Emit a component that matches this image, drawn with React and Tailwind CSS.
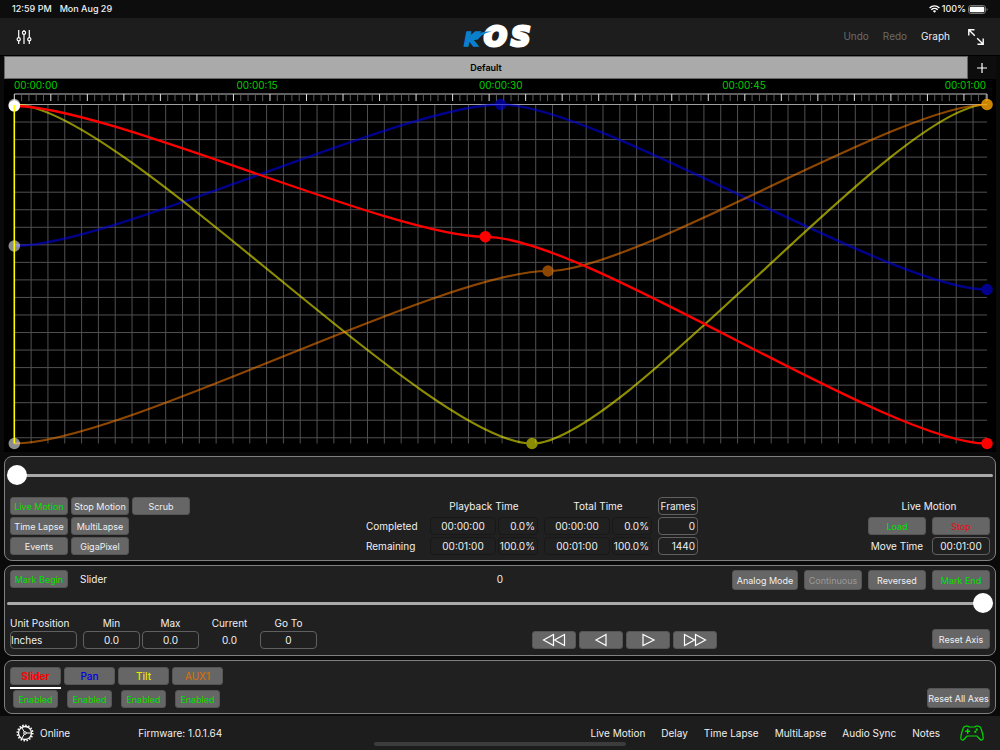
import React from 'react';

// graph area, in viewBox units
const LEFT = 10.3;
const RIGHT = 983;
const TOP = 25.5;
const BOTTOM = 364.5;

const CURVES = [
    { name: 'Pan', color: '#0000ff', opacity: 0.55, width: 2.3, points: [[10.3, 167], [496.7, 25.5], [983, 210.5]] },
    { name: 'Tilt', color: '#ffff00', opacity: 0.55, width: 2.2, points: [[10.3, 25.5], [528, 364.5], [983, 25.5]] },
    { name: 'AUX1', color: '#ff8000', opacity: 0.55, width: 2.2, points: [[10.3, 364.5], [544, 192], [983, 25.5]] },
    { name: 'Slider', color: '#ff0000', opacity: 1, width: 2.3, points: [[10.3, 27], [481.3, 157.8], [983, 364.5]] },
];

const RULER = [
    { label: '00:00:00', x: 10, anchor: 'start' },
    { label: '00:00:15', x: 253, anchor: 'middle' },
    { label: '00:00:30', x: 496.7, anchor: 'middle' },
    { label: '00:00:45', x: 740, anchor: 'middle' },
    { label: '00:01:00', x: 982, anchor: 'end' },
];

const AXES = [
    { name: 'Slider', color: 'text-[#ff0000] font-bold', active: true },
    { name: 'Pan', color: 'text-[#0000e6] font-medium' },
    { name: 'Tilt', color: 'text-[#e6e600] font-medium' },
    { name: 'AUX1', color: 'text-[#e07000]' },
];

const range = (n) => Array.from({ length: n }, (_, i) => i);

const curvePath = (points) => points.map(([x, y], i) => {
    if (i === 0) return `M${x} ${y}`;
    const [px, py] = points[i - 1];
    const h = (x - px) * 0.2;
    return `C${px + h} ${py} ${x - h} ${y} ${x} ${y}`;
}).join(' ');

const Button = ({ className = '', size = 'h-[18px] w-[58px]', text = 'text-[9px]', children, ...rest }) => (
    <button
        {...rest}
        className={`${size} ${text} flex shrink-0 items-center justify-center whitespace-nowrap rounded-[3px] border border-[#555] bg-[#666] leading-none ${className}`}
    >
        {children}
    </button>
);

const RangeSlider = ({ label, value }) => (
    <input
        type="range"
        aria-label={label}
        defaultValue={value}
        className="block h-5 w-full appearance-none bg-transparent [&::-webkit-slider-runnable-track]:h-[3px] [&::-webkit-slider-runnable-track]:rounded-full [&::-webkit-slider-runnable-track]:bg-[#aaa] [&::-webkit-slider-thumb]:-mt-[9px] [&::-webkit-slider-thumb]:size-5 [&::-webkit-slider-thumb]:appearance-none [&::-webkit-slider-thumb]:rounded-full [&::-webkit-slider-thumb]:bg-white"
    />
);

const Panel = ({ className = '', children }) => (
    <section className={`rounded-lg border border-[#808080] bg-[#202020] ${className}`}>
        {children}
    </section>
);

const StatusBar = () => (
    <div className="flex h-[18px] items-center justify-between bg-[#0d0d0d] px-3 text-[9px] font-medium">
        <div className="flex gap-2">
            <span>12:59 PM</span>
            <span>Mon Aug 29</span>
        </div>
        <div className="flex items-center gap-0.5">
            <svg width="11" height="8" viewBox="0 0 11 8" fill="none" stroke="white" strokeWidth="1.4">
                <path d="M.6 2.9a7 7 0 0 1 9.8 0M2.3 4.8a4.6 4.6 0 0 1 6.4 0" />
                <path d="M5.5 7.8 3.8 6.1a2.5 2.5 0 0 1 3.4 0z" fill="white" stroke="none" />
            </svg>
            <span>100%</span>
            <svg width="20" height="9" viewBox="0 0 20 9">
                <rect x=".5" y=".5" width="17" height="8" rx="2.3" fill="none" stroke="#777" />
                <rect x="1.7" y="1.7" width="14.6" height="5.6" rx="1.3" fill="white" />
                <path d="M18.6 3v3c.8-.3 1-.9 1-1.5s-.2-1.2-1-1.5z" fill="#777" />
            </svg>
        </div>
    </div>
);

const Logo = () => (
    <svg width="76" height="34" viewBox="0 0 76 34" role="img" aria-label="kOS" fontFamily="'DejaVu Sans'" fontWeight="700" fontStyle="oblique">
        <text x="2" y="26" fontSize="19" fill="#0a7fcb" stroke="#0a7fcb" strokeWidth="1.4">K</text>
        <text x="22" y="26" fontSize="27" fill="white" stroke="white" strokeWidth="3">O</text>
        <text x="49" y="26" fontSize="27" fill="white" stroke="white" strokeWidth="3">S</text>
        <path d="M7 21c4-7 10-9.5 23-9.5-6 1.200-11 3.500-14 8z" fill="#0a7fcb" />
    </svg>
);

const Toolbar = () => (
    <header className="grid h-[38px] grid-cols-[1fr_auto_1fr] items-center border-b border-black bg-[#1d1d1d] px-4 text-[10px]">
        <button aria-label="Adjustments" className="justify-self-start">
            <svg width="16" height="16" viewBox="0 0 16 16" fill="none" stroke="white" strokeWidth="1.2">
                <path d="M2.7 1v7.6M2.7 11.8V15M8 1v1.200M8 5.400V15M13.300 1v7.600M13.300 11.800V15" />
                <circle cx="2.7" cy="10.2" r="1.6" />
                <circle cx="8" cy="3.8" r="1.6" />
                <circle cx="13.3" cy="10.2" r="1.6" />
            </svg>
        </button>
        <Logo />
        <div className="flex items-center gap-3.5 justify-self-end">
            <button className="text-[#6b6b6b]">Undo</button>
            <button className="text-[#6b6b6b]">Redo</button>
            <button>Graph</button>
            <button aria-label="Full screen" className="ml-1">
                <svg width="16" height="16" viewBox="0 0 16 16" fill="none" stroke="white" strokeWidth="1.4">
                    <path d="M.8 6.500V.8h5.700M1 1l5.800 5.800M9.200 9.200 15 15M15.200 9.500v5.700H9.500" />
                </svg>
            </button>
        </div>
    </header>
);

const Graph = () => (
    <svg viewBox="0 0 992 373" className="block h-auto w-full bg-black">
        <g fill="#00d000" fontSize="10" fontFamily="Inter">
            {RULER.map(({ label, x, anchor }) => (
                <text key={label} x={x} y="10" textAnchor={anchor}>{label}</text>
            ))}
        </g>

        {/* ruler */}
        <path d={`M${LEFT} 15H${RIGHT}`} stroke="#808080" strokeWidth="1.5" />
        {range(134).map((i) => (
            <path key={i} d={`M${LEFT + i * 7.305} 15V22`} stroke={i % 5 === 0 ? '#e0e0e0' : '#5c5c5c'} />
        ))}
        <path d={`M${RIGHT} 15V22`} stroke="#e0e0e0" />

        {/* grid */}
        <g stroke="#505050">
            {range(57).map((i) => (
                <path key={i} d={`M${LEFT + (i + 1) * 16.82} ${TOP}V${BOTTOM}`} />
            ))}
            {range(19).map((i) => (
                <path key={i} d={`M${LEFT} ${TOP + (i + 1) * 17.54}H${RIGHT}`} />
            ))}
        </g>
        <path d={`M${LEFT} ${TOP}H${RIGHT}`} stroke="#a0a0a0" />

        {CURVES.map(({ name, color, opacity, width, points }) => (
            <g key={name} opacity={opacity}>
                <path d={curvePath(points)} fill="none" stroke={color} strokeWidth={width} />
                {points.slice(1).map(([x, y]) => (
                    <circle key={x} cx={x} cy={y} r="5.7" fill={color} />
                ))}
            </g>
        ))}

        {/* start points and playhead */}
        <circle cx={LEFT} cy="167" r="5.8" fill="white" opacity=".55" />
        <circle cx={LEFT} cy="364.5" r="5.8" fill="white" opacity=".55" />
        <circle cx={LEFT} cy={TOP} r="5.8" fill="white" opacity=".6" />
        <circle cx={LEFT} cy="27" r="5.8" fill="white" />
        <path d={`M${LEFT} 26V${BOTTOM}`} stroke="#ffff00" strokeWidth="1.6" />
    </svg>
);

const timeCell = 'w-[66px] rounded-sm border border-[#181818] text-center';
const percentCell = 'w-10 rounded-sm border border-[#181818] pr-0.5 text-right';
const frameCell = 'w-10 rounded-sm border border-[#606060] pr-0.5 text-right';

const TimeRow = ({ label, time, percent, frames }) => (
    <tr className="h-[18px]">
        <th scope="row" className="w-[62px] text-left font-normal">{label}</th>
        <td className={timeCell}>{time}</td>
        <td className={percentCell}>{percent}</td>
        <td></td>
        <td className={timeCell}>{time}</td>
        <td className={percentCell}>{percent}</td>
        <td></td>
        <td className={frameCell}>{frames}</td>
    </tr>
);

const PlaybackPanel = () => (
    <Panel className="px-0.5 pb-[5px] pt-2">
        <RangeSlider label="Playback position" value={0} />
        <div className="mt-3 flex items-start justify-between px-[3px]">
            <div className="grid grid-cols-3 gap-x-[3px] gap-y-0.5">
                <Button className="text-[#00e000]">Live Motion</Button>
                <Button>Stop Motion</Button>
                <Button>Scrub</Button>
                <Button>Time Lapse</Button>
                <Button>MultiLapse</Button>
                <span></span>
                <Button>Events</Button>
                <Button>GigaPixel</Button>
            </div>

            <table className="-my-0.5 ml-1.5 border-separate border-spacing-x-0.5 border-spacing-y-0.5 text-[10px] leading-4">
                <thead>
                    <tr className="h-[18px]">
                        <td></td>
                        <th scope="col" colSpan="2" className="font-normal">Playback Time</th>
                        <td className="w-0.5"></td>
                        <th scope="col" colSpan="2" className="font-normal">Total Time</th>
                        <td className="w-0.5"></td>
                        <th scope="col" className="rounded-sm border border-[#606060] font-normal">Frames</th>
                    </tr>
                </thead>
                <tbody>
                    <TimeRow label="Completed" time="00:00:00" percent="0.0%" frames="0" />
                    <TimeRow label="Remaining" time="00:01:00" percent="100.0%" frames="1440" />
                </tbody>
            </table>

            <div className="grid grid-cols-[58px_58px] gap-x-1.5 gap-y-0.5 text-[10px] leading-[18px]">
                <span className="col-span-2 text-center">Live Motion</span>
                <Button className="text-[#00e000]">Load</Button>
                <Button className="text-[#e01010]">Stop</Button>
                <label htmlFor="move-time" className="whitespace-nowrap text-center">Move Time</label>
                <input id="move-time" defaultValue="00:01:00" className="h-[18px] w-full rounded-sm border border-[#606060] text-center" />
            </div>
        </div>
    </Panel>
);

const Field = ({ id, label, value, className = 'w-[57px] text-center' }) => (
    <div className={className}>
        <label htmlFor={id} className="block h-[15px] whitespace-nowrap leading-[14px]">{label}</label>
        <input id={id} defaultValue={value} className="block h-[18px] w-full rounded-sm border border-[#606060] [text-align:inherit]" />
    </div>
);

const Transport = ({ label, d }) => (
    <Button size="h-[18px] w-11" aria-label={label}>
        <svg width="24" height="14" viewBox="0 0 24 14" fill="none" stroke="white" strokeWidth="1.2">
            <path d={d} />
        </svg>
    </Button>
);

const AxisPanel = () => (
    <Panel className="px-0.5 pb-1.5 pt-1 text-[10px]">
        <div className="grid h-5 grid-cols-[1fr_auto_1fr] px-[3px] leading-[18px]">
            <div className="flex gap-3">
                <Button className="text-[#00e000]">Mark Begin</Button>
                <span>Slider</span>
            </div>
            <span>0</span>
            <div className="flex justify-end gap-1.5">
                <Button size="h-5 w-[66px]">Analog Mode</Button>
                <Button size="h-5 w-[58px]" className="text-[#999]">Continuous</Button>
                <Button size="h-5 w-[58px]">Reversed</Button>
                <Button size="h-5 w-[58px]" className="text-[#00e000]">Mark End</Button>
            </div>
        </div>
        <div className="mt-[3px]">
            <RangeSlider label="Slider position" value={100} />
        </div>
        <div className="mt-[3px] flex items-end justify-between px-[3px]">
            <div className="flex gap-0.5">
                <Field id="unit" label="Unit Position" value="Inches" className="mr-1 w-[67px]" />
                <Field id="min" label="Min" value="0.0" />
                <Field id="max" label="Max" value="0.0" />
                <div className="w-[57px] text-center">
                    <div className="h-[15px] leading-[14px]">Current</div>
                    <div className="leading-[18px]">0.0</div>
                </div>
                <Field id="go-to" label="Go To" value="0" />
            </div>
            <div className="flex gap-[3px]">
                <Transport label="Rewind" d="M11.500 1.500v11L1.500 7zM22.500 1.500v11L12.500 7z" />
                <Transport label="Step back" d="M17 1.500v11L7 7z" />
                <Transport label="Play" d="M7 1.500v11L18 7z" />
                <Transport label="Fast forward" d="M1.500 1.500v11l10-5.500zM12.500 1.500v11l10-5.500z" />
            </div>
            <Button size="h-5 w-[58px]">Reset Axis</Button>
        </div>
    </Panel>
);

const AxesPanel = () => (
    <Panel className="flex items-end justify-between px-[5px] pb-[5px] pt-1.5">
        <div className="flex gap-[3px]">
            {AXES.map(({ name, color, active }) => (
                <div key={name} className="flex flex-col items-center">
                    <Button size="h-[18px] w-[51px]" text="text-[10px]" className={color}>{name}</Button>
                    <div className={`mb-px mt-0.5 h-0.5 w-full ${active ? 'bg-white' : ''}`}></div>
                    <Button size="h-[18px] w-[45px]" className="text-[#00e000]">Enabled</Button>
                </div>
            ))}
        </div>
        <Button size="h-5 w-[63px]">Reset All Axes</Button>
    </Panel>
);

const Footer = () => (
    <footer className="relative mt-auto flex h-[34px] items-center justify-between bg-[#1d1d1d] px-4 text-[10px]">
        <div className="absolute bottom-1 left-1/2 h-1 w-[252px] -translate-x-1/2 rounded-full bg-[#3c3c3c]"></div>
        <div className="relative flex items-center gap-1.5">
            <svg width="18" height="18" viewBox="0 0 18 18" fill="none" stroke="white">
                <circle cx="9" cy="9" r="7.7" strokeWidth="1.6" strokeDasharray="1.5 1.524" />
                <circle cx="9" cy="9" r="6.5" strokeWidth="1.3" />
                <circle cx="9" cy="9" r="1.3" />
                <path d="M10.3 9H15.5M8.3 7.9 5.7 3.400M8.300 10.100l-2.600 4.500" />
            </svg>
            <span>Online</span>
            <span className="ml-[62px]">Firmware: 1.0.1.64</span>
        </div>
        <nav className="relative flex items-center gap-4">
            <a href="#live-motion">Live Motion</a>
            <a href="#delay">Delay</a>
            <a href="#time-lapse">Time Lapse</a>
            <a href="#multilapse">MultiLapse</a>
            <a href="#audio-sync">Audio Sync</a>
            <a href="#notes">Notes</a>
            <button aria-label="Controller" className="ml-1">
                <svg width="24" height="16" viewBox="0 0 24 16" fill="none" stroke="#00dc00" strokeWidth="1.2">
                    <path d="M6 1.200h2l1 .8h6l1-.8h2c1.500 0 2.500.8 3 2.300 1.200 3.300 2.200 7 2.200 9.500 0 2.400-2.200 2.600-3.500 1L17 11H7l-2.700 3c-1.300 1.600-3.500 1.400-3.500-1 0-2.500 1-6.200 2.200-9.500.5-1.500 1.500-2.300 3-2.300z" />
                    <path d="M7.700 3.800v5M5.200 6.300h5" strokeWidth="1.4" />
                    <path d="M16.800 3.500v2M14.300 6.700h2" strokeWidth="2" />
                </svg>
            </button>
        </nav>
    </footer>
);

const App = () => {
    return (
        <div className="flex min-h-screen flex-col bg-[#0a0a0a] font-['Inter',sans-serif] text-[#f0f0f0]">
            <StatusBar />
            <Toolbar />
            <main className="px-1">
                <div className="flex h-[23px] bg-[#0d0d0d]">
                    <button className="flex-1 border border-[#666] bg-[#aaa] text-[9px] font-semibold text-black">Default</button>
                    <button aria-label="Add tab" className="flex w-7 items-center justify-center">
                        <svg width="10" height="10" viewBox="0 0 10 10" stroke="white" strokeWidth="1.2">
                            <path d="M5 0v10M0 5h10" />
                        </svg>
                    </button>
                </div>
                <Graph />
                <div className="flex flex-col gap-1 pt-1">
                    <PlaybackPanel />
                    <AxisPanel />
                    <AxesPanel />
                </div>
            </main>
            <Footer />
        </div>
    );
};

export default App;
